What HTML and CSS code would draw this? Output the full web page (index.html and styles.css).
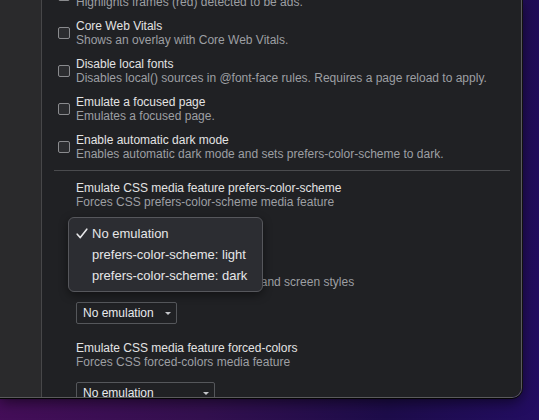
FILE: index.html
```html
<!DOCTYPE html>
<html>
<head>
<meta charset="utf-8">
<link rel="stylesheet" href="styles.css">
</head>
<body>
<div class="window">
  <div class="sidebar"></div>
  <div class="main">
    <div class="content">
      <div class="row">
        <span class="checkbox"></span>
        <div class="text">
          <div class="title">Highlight ad frames</div>
          <div class="desc">Highlights frames (red) detected to be ads.</div>
        </div>
      </div>
      <div class="row">
        <span class="checkbox"></span>
        <div class="text">
          <div class="title">Core Web Vitals</div>
          <div class="desc">Shows an overlay with Core Web Vitals.</div>
        </div>
      </div>
      <div class="row">
        <span class="checkbox"></span>
        <div class="text">
          <div class="title">Disable local fonts</div>
          <div class="desc">Disables local() sources in @font-face rules. Requires a page reload to apply.</div>
        </div>
      </div>
      <div class="row">
        <span class="checkbox"></span>
        <div class="text">
          <div class="title">Emulate a focused page</div>
          <div class="desc">Emulates a focused page.</div>
        </div>
      </div>
      <div class="row">
        <span class="checkbox"></span>
        <div class="text">
          <div class="title">Enable automatic dark mode</div>
          <div class="desc">Enables automatic dark mode and sets prefers-color-scheme to dark.</div>
        </div>
      </div>
      <div class="separator"></div>
      <div class="section">
        <div class="title">Emulate CSS media feature prefers-color-scheme</div>
        <div class="desc">Forces CSS prefers-color-scheme media feature</div>
        <div class="select sel-wide"><span>No emulation</span><span class="arrow"></span></div>
      </div>
      <div class="section">
        <div class="title">Emulate CSS media type</div>
        <div class="desc">Forces media type for testing print and screen styles</div>
        <div class="select"><span>No emulation</span><span class="arrow"></span></div>
      </div>
      <div class="section">
        <div class="title">Emulate CSS media feature forced-colors</div>
        <div class="desc">Forces CSS forced-colors media feature</div>
        <div class="select sel-wide"><span>No emulation</span><span class="arrow"></span></div>
      </div>
    </div>
    <div class="popup">
      <div class="item"><span class="check"><svg width="12" height="11" viewBox="0 0 12 11"><path d="M1.2 6.2 L4.3 9.6 L10.8 1.2" fill="none" stroke="#e6e6e8" stroke-width="1.6" stroke-linecap="round" stroke-linejoin="round"/></svg></span>No emulation</div>
      <div class="item"><span class="check"></span>prefers-color-scheme: light</div>
      <div class="item"><span class="check"></span>prefers-color-scheme: dark</div>
    </div>
  </div>
</div>
</body>
</html>
```
FILE: styles.css
```css
html, body {
  margin: 0;
  padding: 0;
}
body {
  width: 539px;
  height: 420px;
  overflow: hidden;
  background: linear-gradient(100deg, #4a0d5c 0%, #33104f 45%, #1d0c4a 75%, #230d62 100%);
  font-family: "Liberation Sans", Arial, sans-serif;
}
.window {
  width: 521px;
  height: 397px;
  display: flex;
  border-right: 1px solid #5a5a5c;
  border-bottom: 1px solid #5a5a5c;
  border-bottom-right-radius: 10px;
  overflow: hidden;
  box-shadow: 0 1px 0 #050505, 1px 0 0 #111, 0 4px 14px rgba(0, 0, 0, 0.55);
}
.sidebar {
  width: 41px;
  flex: none;
  background: #2a2a2c;
  border-right: 1px solid #474749;
}
.main {
  flex: 1;
  position: relative;
  background: #202124;
  overflow: hidden;
}
.content {
  margin-top: -20px;
  padding-left: 16px;
}
.row {
  display: flex;
  align-items: center;
  gap: 6px;
  padding-bottom: 9px;
}
.text {
  padding-top: 1px;
}
.checkbox {
  width: 10px;
  height: 10px;
  border: 1px solid #8a8b8e;
  border-radius: 2px;
  background: #2c2d30;
  flex: none;
}
.title {
  font-size: 12px;
  line-height: 14px;
  color: #e3e3e3;
  white-space: nowrap;
}
.desc {
  font-size: 12px;
  line-height: 14px;
  color: #9d9fa3;
  white-space: nowrap;
}
.separator {
  height: 1px;
  background: #4a4b4e;
  margin: 0 11px 9px -4px;
}
.section {
  padding-left: 18px;
  padding-top: 1px;
  padding-bottom: 16px;
}
.select {
  margin-top: 13px;
  width: 93px;
  height: 20px;
  border: 1px solid #55575b;
  border-radius: 2px;
  background: #202124;
  color: #e8eaed;
  font-size: 12px;
  line-height: 20px;
  padding-left: 6px;
  display: flex;
  align-items: center;
  justify-content: space-between;
}
.select.sel-wide {
  width: 131px;
}
.arrow {
  width: 0;
  height: 0;
  border-left: 3px solid transparent;
  border-right: 3px solid transparent;
  border-top: 3px solid #c4c6ca;
  margin-right: 5px;
}
.popup {
  position: absolute;
  left: 26px;
  top: 217px;
  width: 193px;
  padding: 5px 0;
  background: #2c2d32;
  border: 1px solid #56575c;
  border-radius: 6px;
  box-shadow: 0 3px 10px rgba(0, 0, 0, 0.45);
}
.item {
  display: flex;
  align-items: center;
  height: 21px;
  font-size: 13px;
  color: #e6e6e8;
  white-space: nowrap;
}
.check {
  width: 16px;
  margin-left: 7px;
  display: flex;
  align-items: center;
}
```
